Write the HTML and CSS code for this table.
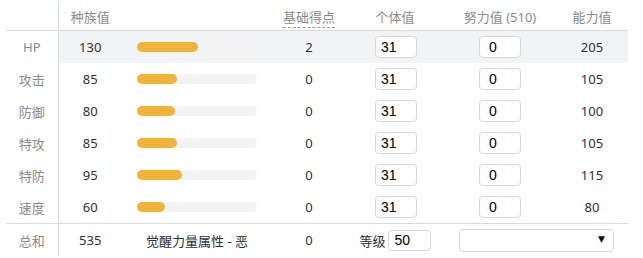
FILE: index.html
```html
<!DOCTYPE html>
<html lang="zh">
<head>
<meta charset="utf-8">
<link rel="stylesheet" href="styles.css">
</head>
<body>
<table class="stats">
  <colgroup>
    <col class="c-label"><col class="c-base"><col class="c-bar"><col class="c-pts"><col class="c-iv"><col class="c-ev"><col class="c-stat">
  </colgroup>
  <thead>
    <tr>
      <th class="label"></th>
      <th>种族值</th>
      <th></th>
      <th><span class="dashed">基础得点</span></th>
      <th>个体值</th>
      <th>努力值 (510)</th>
      <th>能力值</th>
    </tr>
  </thead>
  <tbody>
    <tr class="active">
      <th class="label">HP</th>
      <td>130</td>
      <td><div class="track"><div class="fill" style="width:50.98%"></div></div></td>
      <td>2</td>
      <td><input class="iv" value="31"></td>
      <td><input class="ev" value="0"></td>
      <td>205</td>
    </tr>
    <tr>
      <th class="label">攻击</th>
      <td>85</td>
      <td><div class="track"><div class="fill" style="width:33.33%"></div></div></td>
      <td>0</td>
      <td><input class="iv" value="31"></td>
      <td><input class="ev" value="0"></td>
      <td>105</td>
    </tr>
    <tr>
      <th class="label">防御</th>
      <td>80</td>
      <td><div class="track"><div class="fill" style="width:31.37%"></div></div></td>
      <td>0</td>
      <td><input class="iv" value="31"></td>
      <td><input class="ev" value="0"></td>
      <td>100</td>
    </tr>
    <tr>
      <th class="label">特攻</th>
      <td>85</td>
      <td><div class="track"><div class="fill" style="width:33.33%"></div></div></td>
      <td>0</td>
      <td><input class="iv" value="31"></td>
      <td><input class="ev" value="0"></td>
      <td>105</td>
    </tr>
    <tr>
      <th class="label">特防</th>
      <td>95</td>
      <td><div class="track"><div class="fill" style="width:37.25%"></div></div></td>
      <td>0</td>
      <td><input class="iv" value="31"></td>
      <td><input class="ev" value="0"></td>
      <td>115</td>
    </tr>
    <tr>
      <th class="label">速度</th>
      <td>60</td>
      <td><div class="track"><div class="fill" style="width:23.53%"></div></div></td>
      <td>0</td>
      <td><input class="iv" value="31"></td>
      <td><input class="ev" value="0"></td>
      <td>80</td>
    </tr>
  </tbody>
  <tfoot>
    <tr>
      <th class="label">总和</th>
      <td>535</td>
      <td class="hp-type">觉醒力量属性 - 恶</td>
      <td>0</td>
      <td><span class="level">等级<input class="lv" value="50"></span></td>
      <td colspan="2"><span class="select"><span class="arrow">▼</span></span></td>
    </tr>
  </tfoot>
</table>
</body>
</html>
```
FILE: styles.css
```css
html, body {
  margin: 0;
  padding: 0;
  background: #fff;
}
body {
  padding: 3px 0 0 6px;
  font-family: "Noto Sans", "Noto Sans CJK SC", sans-serif;
  font-size: 13px;
  color: #2a2f3a;
}
.stats {
  border-collapse: collapse;
  table-layout: fixed;
  width: 622px;
}
.c-label { width: 52px; }
.c-base { width: 64px; }
.c-bar { width: 150px; }
.c-pts { width: 74px; }
.c-iv { width: 98px; }
.c-ev { width: 112px; }
.c-stat { width: 72px; }

.stats th, .stats td {
  padding: 0;
  text-align: center;
  font-weight: normal;
  vertical-align: middle;
}
.stats thead th {
  height: 27px;
  color: #8a8a8a;
  border-bottom: 1px solid #d6dae1;
}
.stats tbody td, .stats tbody th, .stats tfoot td, .stats tfoot th {
  height: 32px;
}
.stats tfoot tr {
  border-top: 1px solid #d6dae1;
}
.stats .label {
  border-right: 1px solid #d6dae1;
  color: #8a8a8a;
}
.stats tr.active td {
  background: #f2f3f5;
}
.dashed {
  border-bottom: 1px dashed #999;
  padding-bottom: 1px;
}
.track {
  margin: 0 15px;
  height: 10px;
  border-radius: 5px;
  background: #f3f3f3;
}
.fill {
  height: 10px;
  border-radius: 5px;
  background: #f0b43a;
}
input {
  box-sizing: border-box;
  height: 22px;
  border: 1px solid #d3d6db;
  border-radius: 4px;
  background: #fff;
  font-family: "Liberation Sans", Arial, sans-serif;
  font-size: 14px;
  color: #000;
  outline: none;
  vertical-align: middle;
}
input.iv {
  width: 42px;
  padding: 0 0 0 5px;
  margin-left: 2px;
}
input.ev {
  width: 42px;
  padding: 0 0 0 9px;
}
.level {
  display: inline-flex;
  align-items: center;
  gap: 2px;
}
input.lv {
  width: 43px;
  height: 21px;
  padding: 0 0 0 6px;
}
.select {
  position: relative;
  display: block;
  box-sizing: border-box;
  width: 155px;
  height: 23px;
  margin: 0 0 0 15px;
  border: 1px solid #d3d6db;
  border-radius: 4px;
  background: #fff;
}
.arrow {
  position: absolute;
  right: 8px;
  top: 4px;
  font-size: 9px;
  color: #111;
  font-family: "DejaVu Sans", sans-serif;
}
```
